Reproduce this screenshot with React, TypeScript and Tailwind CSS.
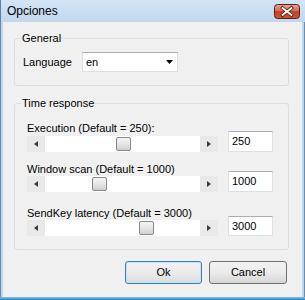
import React from 'react';

const font = { fontFamily: '"Liberation Sans", Arial, sans-serif' };

type SliderProps = { thumb: number };

// thumb = left offset of the thumb inside the track (px)
const Slider: React.FC<SliderProps> = ({ thumb }) => (
  <div className="flex w-[191px] h-[16px] bg-white">
    <div className="w-[18px] h-full bg-[#e9e9e9] flex items-center justify-center">
      <svg width="4" height="6" viewBox="0 0 4 6">
        <path d="M4 0 L0 3 L4 6 Z" fill="#3a3a3a" />
      </svg>
    </div>
    <div className="flex-1 h-full flex items-center">
      <div className="h-[14px] bg-white" style={{ width: thumb }} />
      <div className="w-[15px] h-[14px] rounded-[2px] border border-[#8a8a8a] bg-gradient-to-b from-[#f4f4f4] via-[#e6e6e6] to-[#cfcfcf]" />
    </div>
    <div className="w-[18px] h-full bg-[#e9e9e9] flex items-center justify-center">
      <svg width="4" height="6" viewBox="0 0 4 6">
        <path d="M0 0 L4 3 L0 6 Z" fill="#3a3a3a" />
      </svg>
    </div>
  </div>
);

const TextBox: React.FC<{ value: string; h?: string }> = ({ value, h = 'h-[21px]' }) => (
  <div
    className={`w-[45px] ${h} bg-white border border-[#dbdfe6] border-t-[#abadb3] flex items-center pl-[3px] text-[11px] text-black`}
  >
    {value}
  </div>
);

// Vista style red close button
const CloseButton: React.FC = () => (
  <svg width="26" height="15" viewBox="0 0 26 15" className="mt-[4px] mr-[5px]">
    <defs>
      <linearGradient id="closeRed" x1="0" y1="0" x2="0" y2="1">
        <stop offset="0" stopColor="#e8a593" />
        <stop offset="0.45" stopColor="#d56a52" />
        <stop offset="0.5" stopColor="#c2432a" />
        <stop offset="1" stopColor="#c8573a" />
      </linearGradient>
    </defs>
    <rect x="0.5" y="0.5" width="25" height="14" rx="3" fill="url(#closeRed)" stroke="#5e1f15" />
    <path d="M8.5 4 L17.5 11 M17.5 4 L8.5 11" stroke="#4f1d14" strokeWidth="3.4" strokeLinecap="square" />
    <path d="M8.5 4 L17.5 11 M17.5 4 L8.5 11" stroke="#ffffff" strokeWidth="1.8" strokeLinecap="square" />
  </svg>
);

const App: React.FC = () => {
  return (
    <div className="w-[305px] h-[300px] flex flex-col bg-[#f0f0f0] overflow-hidden" style={font}>
      {/* title bar */}
      <div className="h-[22px] flex items-start justify-between bg-gradient-to-b from-[#d3e4f4] to-[#c2d8ee] border-l border-[#5c7fa3]">
        <span className="pl-[6px] pt-[4px] text-[12px] leading-[14px] text-black">Opciones</span>
        <CloseButton />
      </div>

      <div className="flex-1 flex">
        <div className="w-[3px] bg-gradient-to-r from-[#3f6e96] via-[#b9d2ea] to-[#c8dcef]" />

        <div className="flex-1 bg-[#f0f0f0] pl-[11px] pt-[10px] text-[11px] leading-[13px] text-black">
          {/* General */}
          <fieldset className="w-[275px] border border-[#d5dfe5] rounded-[3px] pl-[8px] pt-[7px] pb-[13px]">
            <legend className="ml-[-2px] px-[1px]">General</legend>
            <div className="flex items-center">
              <span className="w-[59px]">Language</span>
              <div className="w-[96px] h-[20px] bg-white border border-[#dbdfe6] border-t-[#abadb3] flex items-center justify-between pl-[3px] pr-[4px]">
                <span>en</span>
                <svg width="7" height="4" viewBox="0 0 7 4">
                  <path d="M0 0 L7 0 L3.5 4 Z" fill="#000000" />
                </svg>
              </div>
            </div>
          </fieldset>

          {/* Time response */}
          <fieldset className="w-[275px] mt-[11px] border border-[#d5dfe5] rounded-[3px] pl-[12px] pt-[12px] pb-[13px]">
            <legend className="ml-[-6px] px-[1px]">Time response</legend>

            <div className="flex items-end gap-[10px]">
              <div className="flex flex-col">
                <span>Execution (Default = 250):</span>
                <div className="mt-[1px]">
                  <Slider thumb={71} />
                </div>
              </div>
              <TextBox value="250" />
            </div>

            <div className="flex items-end gap-[10px] mt-[11px]">
              <div className="flex flex-col">
                <span>Window scan (Default = 1000)</span>
                <Slider thumb={47} />
              </div>
              <TextBox value="1000" />
            </div>

            <div className="flex items-end gap-[10px] mt-[15px]">
              <div className="flex flex-col">
                <span>SendKey latency (Default = 3000)</span>
                <Slider thumb={94} />
              </div>
              <TextBox value="3000" h="h-[20px]" />
            </div>
          </fieldset>

          {/* buttons */}
          <div className="w-[275px] flex justify-end gap-[7px] pr-[2px] mt-[11px]">
            <button className="w-[77px] h-[23px] rounded-[3px] border border-[#3c7fb1] bg-gradient-to-b from-[#f2f2f2] via-[#ebebeb] to-[#d9dde0] text-[11px] text-black shadow-[inset_0_0_0_1px_#bfe6f8]">
              Ok
            </button>
            <button className="w-[78px] h-[23px] rounded-[3px] border border-[#707070] bg-gradient-to-b from-[#f2f2f2] via-[#ebebeb] to-[#d6d6d6] text-[11px] text-black">
              Cancel
            </button>
          </div>
        </div>

        <div className="w-[3px] bg-gradient-to-r from-[#c8dcef] via-[#b9d2ea] to-[#3f6e96]" />
      </div>

      <div className="h-[3px] bg-gradient-to-b from-[#7fc4ec] to-[#1f86c6]" />
    </div>
  );
};

export default App;
